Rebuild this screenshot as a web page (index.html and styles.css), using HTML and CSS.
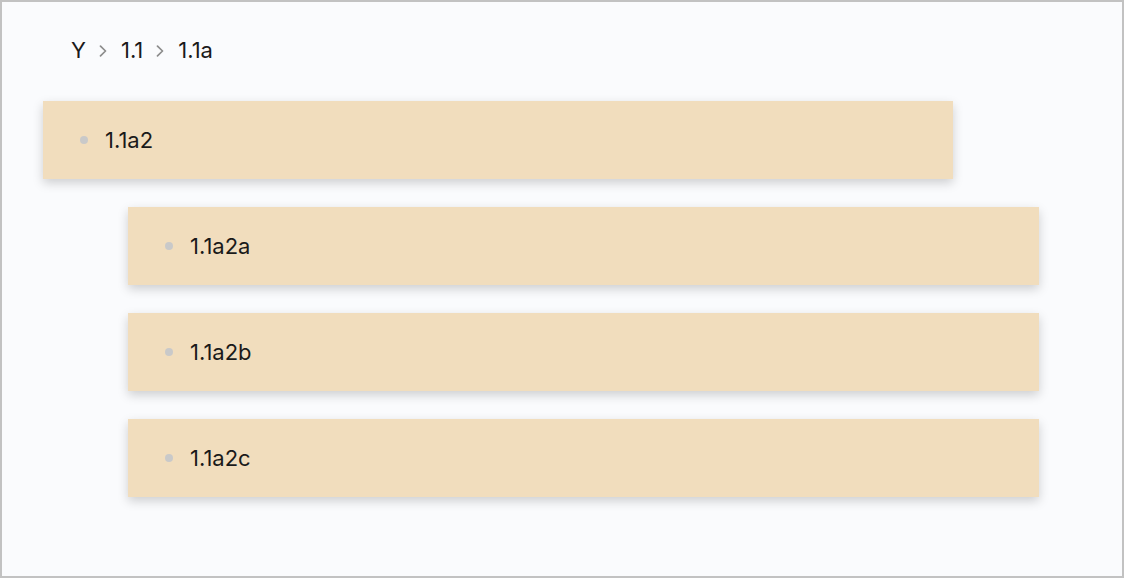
FILE: index.html
```html
<!DOCTYPE html>
<html>
<head>
<meta charset="utf-8">
<link rel="stylesheet" href="styles.css">
</head>
<body>
<div class="frame">
  <nav class="crumbs">
    <span class="crumb">Y</span>
    <svg class="chev" viewBox="0 0 8 12" width="8" height="12"><path d="M1.5 1.2 L6.5 6 L1.5 10.8" fill="none" stroke="#8c8c8c" stroke-width="1.7" stroke-linecap="round" stroke-linejoin="round"/></svg>
    <span class="crumb">1.1</span>
    <svg class="chev" viewBox="0 0 8 12" width="8" height="12"><path d="M1.5 1.2 L6.5 6 L1.5 10.8" fill="none" stroke="#8c8c8c" stroke-width="1.7" stroke-linecap="round" stroke-linejoin="round"/></svg>
    <span class="crumb">1.1a</span>
  </nav>
  <div class="tree">
    <div class="card parent"><span class="dot"></span><span class="label">1.1a2</span></div>
    <div class="children">
      <div class="card"><span class="dot"></span><span class="label">1.1a2a</span></div>
      <div class="card"><span class="dot"></span><span class="label">1.1a2b</span></div>
      <div class="card"><span class="dot"></span><span class="label">1.1a2c</span></div>
    </div>
  </div>
</div>
</body>
</html>
```
FILE: styles.css
```css
html, body {
  margin: 0;
  padding: 0;
}
body {
  width: 1124px;
  height: 578px;
  font-family: Inter, "Noto Sans", sans-serif;
  color: #1a1a1a;
}
.frame {
  box-sizing: border-box;
  width: 1124px;
  height: 578px;
  border: 2px solid #c2c2c2;
  background: #fafbfd;
  padding: 34px 0 0 41px;
}
.crumbs {
  display: flex;
  align-items: center;
  height: 28px;
  padding-left: 28px;
  font-size: 22px;
}
.chev {
  margin: 2px 14px 0 13px;
}
.tree {
  margin-top: 37px;
  display: flex;
  flex-direction: column;
  gap: 28px;
}
.card {
  display: flex;
  align-items: center;
  height: 78px;
  background: #f1ddbd;
  box-shadow: 0 4px 10px rgba(0, 0, 0, 0.18);
  padding-left: 37px;
  box-sizing: border-box;
}
.parent {
  width: 910px;
}
.children {
  display: flex;
  flex-direction: column;
  gap: 28px;
  margin-left: 85px;
  width: 911px;
}
.dot {
  width: 8px;
  height: 8px;
  border-radius: 50%;
  background: #c9c9c9;
  margin-right: 17px;
}
.label {
  font-size: 22px;
}
```
